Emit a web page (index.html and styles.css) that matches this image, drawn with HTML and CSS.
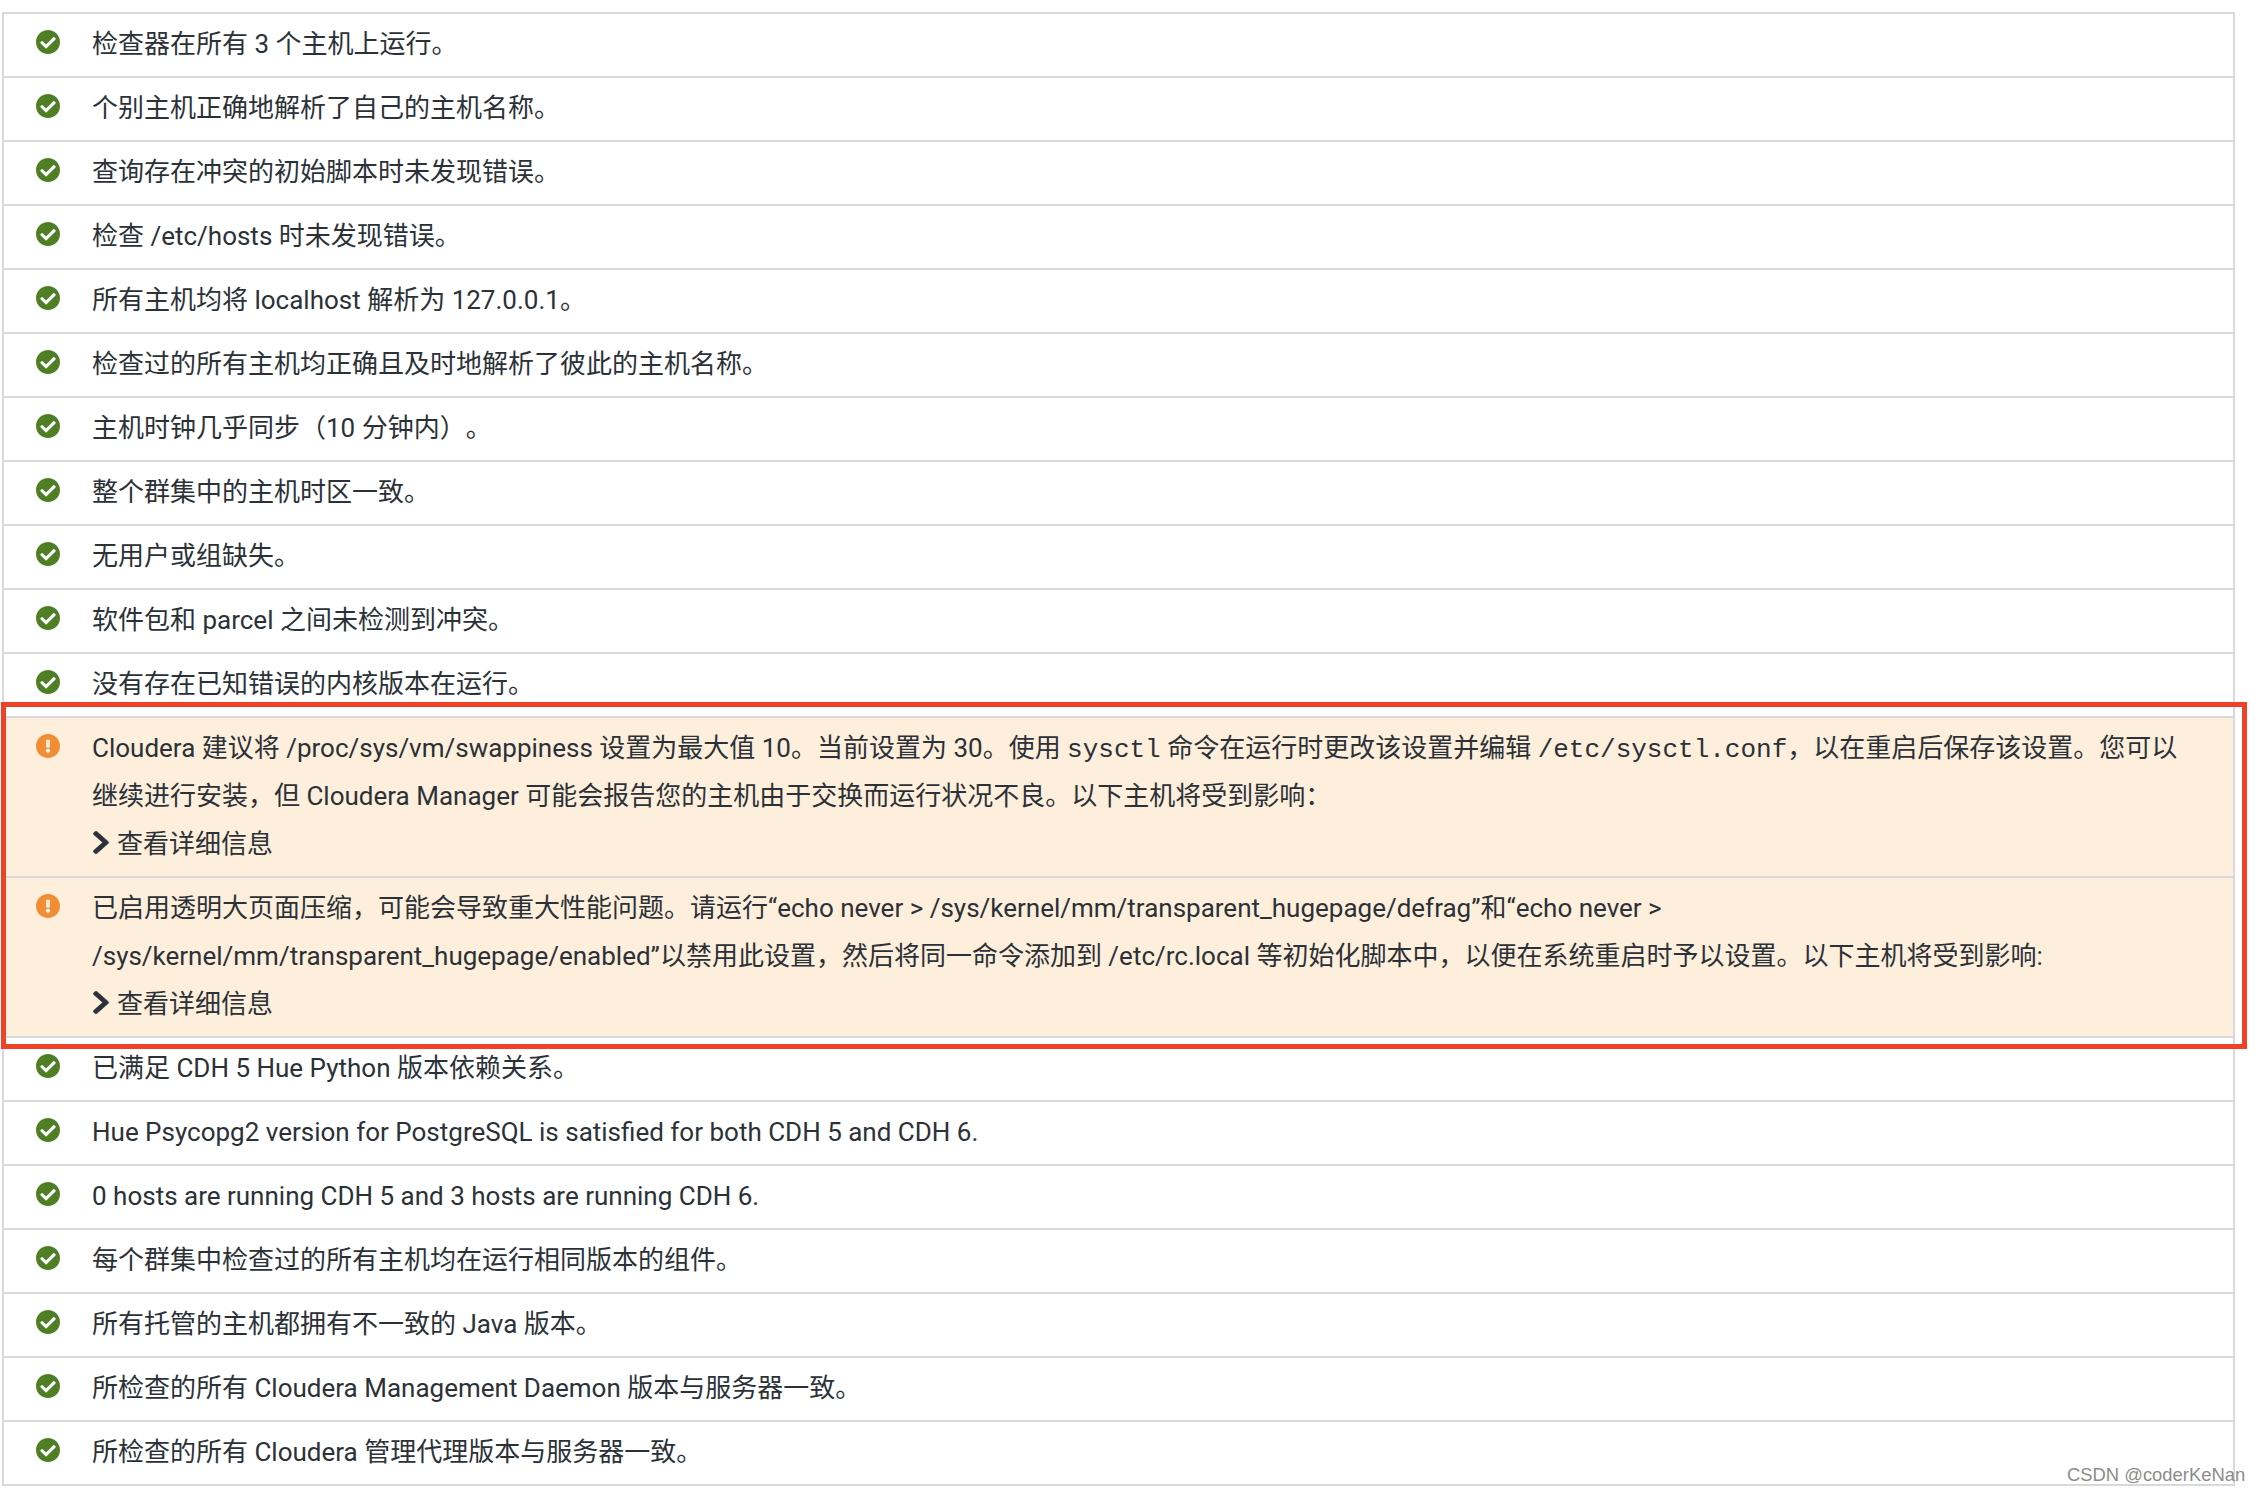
FILE: index.html
```html
<!DOCTYPE html>
<html lang="zh-CN">
<head>
<meta charset="utf-8">
<title>Host inspector results</title>
<link rel="stylesheet" href="styles.css">
</head>
<body>
<svg class="sprite" aria-hidden="true">
  <symbol id="ok" viewBox="8 8 496 496" preserveAspectRatio="none"><path d="M504 256c0 136.967-111.033 248-248 248S8 392.967 8 256 119.033 8 256 8s248 111.033 248 248zM227.314 387.314l184-184c6.248-6.248 6.248-16.379 0-22.627l-22.627-22.627c-6.248-6.249-16.379-6.249-22.628 0L216 308.118l-70.059-70.059c-6.248-6.248-16.379-6.248-22.628 0l-22.627 22.627c-6.248 6.248-6.248 16.379 0 22.627l104 104c6.249 6.249 16.379 6.249 22.628 0z"/></symbol>
  <symbol id="warn" viewBox="8 8 496 496" preserveAspectRatio="none"><path d="M504 256c0 136.997-111.043 248-248 248S8 392.997 8 256C8 119.083 119.043 8 256 8s248 111.083 248 248zm-248 50c-25.405 0-46 20.595-46 46s20.595 46 46 46 46-20.595 46-46-20.595-46-46-46zm-43.673-165.346l7.418 136c.347 6.364 5.609 11.346 11.982 11.346h48.546c6.373 0 11.635-4.982 11.982-11.346l7.418-136c.375-6.874-5.098-12.654-11.982-12.654h-63.383c-6.884 0-12.356 5.78-11.981 12.654z"/></symbol>
  <symbol id="chev" viewBox="22 32 276 448" preserveAspectRatio="none"><path d="M285.476 272.971L91.132 467.314c-9.373 9.373-24.569 9.373-33.941 0l-22.667-22.667c-9.357-9.357-9.375-24.522-.04-33.901L188.505 256 34.484 101.255c-9.335-9.379-9.317-24.544.04-33.901l22.667-22.667c9.373-9.373 24.569-9.373 33.941 0L285.475 239.03c9.373 9.372 9.373 24.568.001 33.941z"/></symbol>
</svg>
<main class="page">
  <ul class="checks">
    <li class="row"><svg class="ico ok"><use href="#ok"/></svg><div class="msg">检查器在所有 3 个主机上运行。</div></li>
    <li class="row"><svg class="ico ok"><use href="#ok"/></svg><div class="msg">个别主机正确地解析了自己的主机名称。</div></li>
    <li class="row"><svg class="ico ok"><use href="#ok"/></svg><div class="msg">查询存在冲突的初始脚本时未发现错误。</div></li>
    <li class="row"><svg class="ico ok"><use href="#ok"/></svg><div class="msg">检查 /etc/hosts 时未发现错误。</div></li>
    <li class="row"><svg class="ico ok"><use href="#ok"/></svg><div class="msg">所有主机均将 localhost 解析为 127.0.0.1。</div></li>
    <li class="row"><svg class="ico ok"><use href="#ok"/></svg><div class="msg">检查过的所有主机均正确且及时地解析了彼此的主机名称。</div></li>
    <li class="row"><svg class="ico ok"><use href="#ok"/></svg><div class="msg">主机时钟几乎同步（10 分钟内）。</div></li>
    <li class="row"><svg class="ico ok"><use href="#ok"/></svg><div class="msg">整个群集中的主机时区一致。</div></li>
    <li class="row"><svg class="ico ok"><use href="#ok"/></svg><div class="msg">无用户或组缺失。</div></li>
    <li class="row"><svg class="ico ok"><use href="#ok"/></svg><div class="msg">软件包和 parcel 之间未检测到冲突。</div></li>
    <li class="row"><svg class="ico ok"><use href="#ok"/></svg><div class="msg">没有存在已知错误的内核版本在运行。</div></li>
    <li class="row warning"><svg class="ico warn"><use href="#warn"/></svg><div class="msg">Cloudera 建议将 /proc/sys/vm/swappiness 设置为最大值 10。当前设置为 30。使用 <code>sysctl</code> 命令在运行时更改该设置并编辑 <code>/etc/sysctl.conf</code>，以在重启后保存该设置。您可以<br>继续进行安装，但 Cloudera Manager 可能会报告您的主机由于交换而运行状况不良。以下主机将受到影响：<div class="more"><svg class="chev"><use href="#chev"/></svg>查看详细信息</div></div></li>
    <li class="row warning"><svg class="ico warn"><use href="#warn"/></svg><div class="msg">已启用透明大页面压缩，可能会导致重大性能问题。请运行“echo never &gt; /sys/kernel/mm/transparent_hugepage/defrag”和“echo never &gt;<br>/sys/kernel/mm/transparent_hugepage/enabled”以禁用此设置，然后将同一命令添加到 /etc/rc.local 等初始化脚本中，以便在系统重启时予以设置。以下主机将受到影响:<div class="more"><svg class="chev"><use href="#chev"/></svg>查看详细信息</div></div></li>
    <li class="row"><svg class="ico ok"><use href="#ok"/></svg><div class="msg">已满足 CDH 5 Hue Python 版本依赖关系。</div></li>
    <li class="row"><svg class="ico ok"><use href="#ok"/></svg><div class="msg">Hue Psycopg2 version for PostgreSQL is satisfied for both CDH 5 and CDH 6.</div></li>
    <li class="row"><svg class="ico ok"><use href="#ok"/></svg><div class="msg">0 hosts are running CDH 5 and 3 hosts are running CDH 6.</div></li>
    <li class="row"><svg class="ico ok"><use href="#ok"/></svg><div class="msg">每个群集中检查过的所有主机均在运行相同版本的组件。</div></li>
    <li class="row"><svg class="ico ok"><use href="#ok"/></svg><div class="msg">所有托管的主机都拥有不一致的 Java 版本。</div></li>
    <li class="row"><svg class="ico ok"><use href="#ok"/></svg><div class="msg">所检查的所有 Cloudera Management Daemon 版本与服务器一致。</div></li>
    <li class="row"><svg class="ico ok"><use href="#ok"/></svg><div class="msg">所检查的所有 Cloudera 管理代理版本与服务器一致。</div></li>
  </ul>
  <div class="callout"></div>
  <div class="watermark">CSDN @coderKeNan</div>
</main>
</body>
</html>
```
FILE: styles.css
```css
html, body { margin: 0; padding: 0; background: #fff; }
.sprite { display: none; }
.page {
  position: relative;
  box-sizing: border-box;
  width: 2260px;
  height: 1492px;
  padding: 12px 25px 0 2px;
  overflow: hidden;
  font-family: Roboto, "Noto Sans CJK SC", sans-serif;
  font-size: 26px;
  line-height: 48px;
  color: #2c3138;
  text-spacing-trim: space-all;
}
.checks {
  list-style: none;
  margin: 0;
  padding: 0;
  border: solid #d8d8de;
  border-width: 2px 2px 0 2px;
}
.row {
  display: flex;
  align-items: flex-start;
  padding: 6px 0 8px;
  border-bottom: 2px solid #d8d8de;
}
.warning { background: #fdefdc; }
.ico {
  flex: none;
  width: 24px;
  height: 24px;
  margin: 10px 32px 0 32px;
  fill: currentColor;
}
.ok { color: #4f7f25; }
.warn { color: #f28c35; }
.msg { white-space: nowrap; }
code { font-family: "Liberation Mono", monospace; font-size: 26px; line-height: 0; }
.more { display: flex; align-items: center; }
.chev {
  width: 16px;
  height: 23px;
  margin: 0 8px 4px 1px;
  fill: #2c3138;
  stroke: #2c3138;
  stroke-width: 12;
}
.callout {
  position: absolute;
  left: 1px;
  top: 702px;
  width: 2246px;
  height: 347px;
  box-sizing: border-box;
  border: 5px solid #ee4127;
}
.watermark {
  position: absolute;
  left: 2067px;
  top: 1463px;
  font-family: "Liberation Sans", sans-serif;
  font-size: 18.4px;
  line-height: 24px;
  color: #8c8c8c;
  white-space: nowrap;
}
```
